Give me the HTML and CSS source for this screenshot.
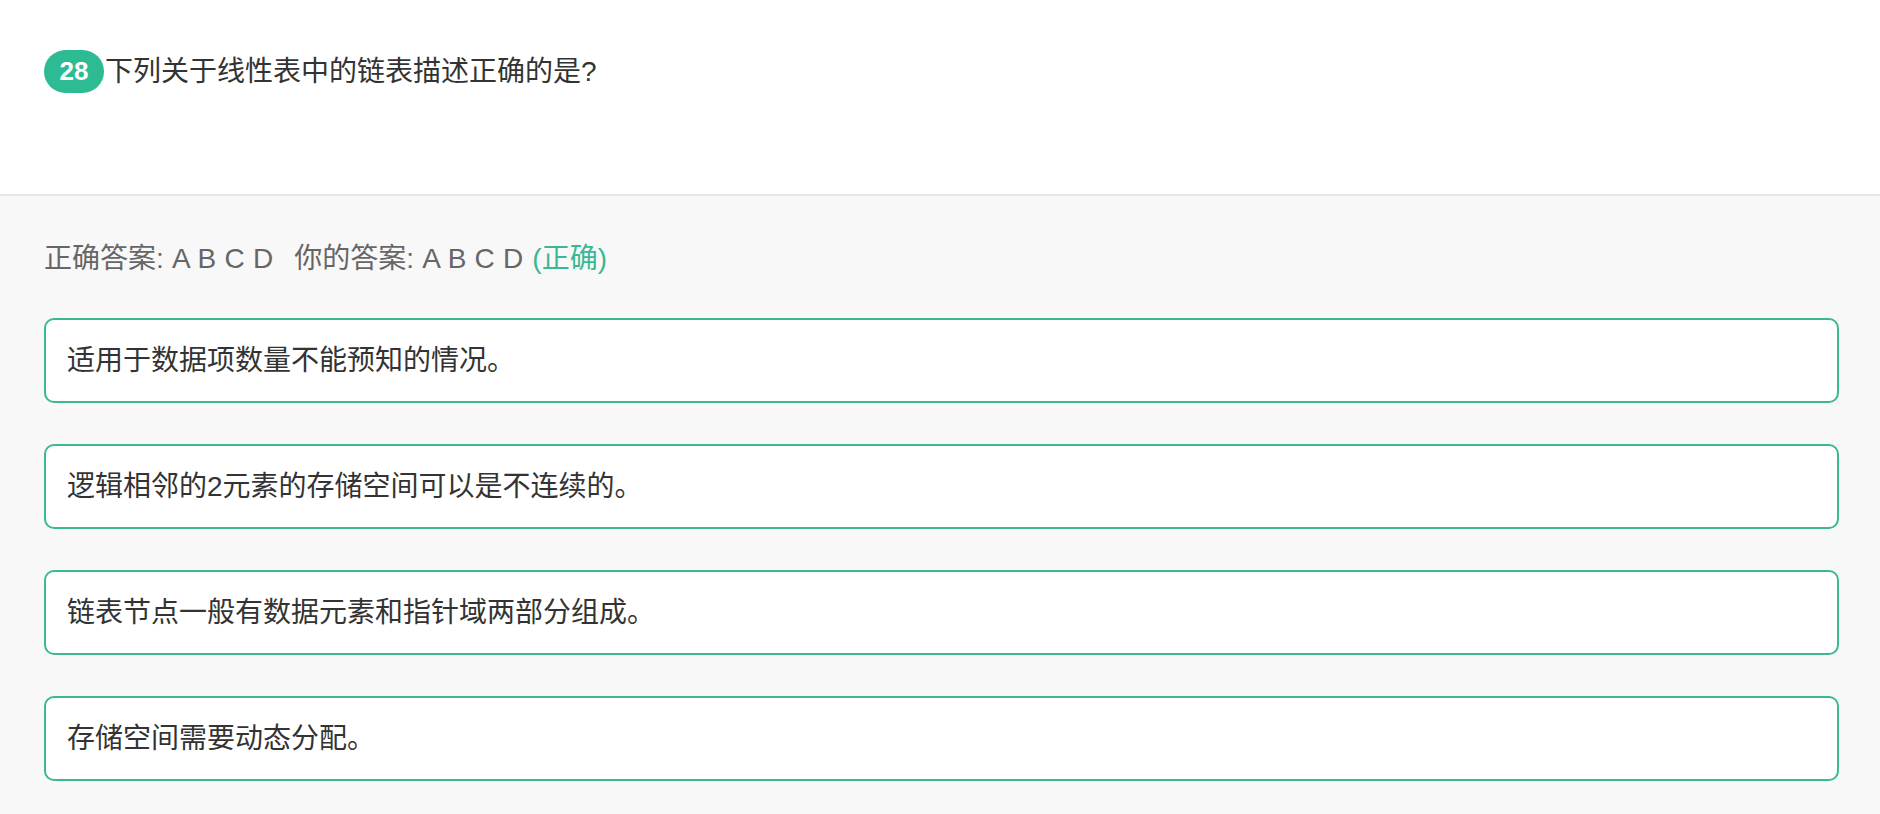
FILE: index.html
```html
<!DOCTYPE html>
<html lang="zh-CN">
<head>
<meta charset="utf-8">
<title>题目</title>
<link rel="stylesheet" href="styles.css">
</head>
<body>
<div class="question">
  <div class="q-row">
    <span class="badge">28</span>
    <span class="q-text">下列关于线性表中的链表描述正确的是?</span>
  </div>
</div>
<div class="answer-area">
  <div class="answer-line">
    <span class="label">正确答案: A B C D</span>
    <span class="label mine">你的答案: A B C D</span>
    <span class="result">(正确)</span>
  </div>
  <div class="options">
    <div class="option">适用于数据项数量不能预知的情况。</div>
    <div class="option">逻辑相邻的2元素的存储空间可以是不连续的。</div>
    <div class="option">链表节点一般有数据元素和指针域两部分组成。</div>
    <div class="option">存储空间需要动态分配。</div>
  </div>
</div>
</body>
</html>
```
FILE: styles.css
```css
html, body {
  margin: 0;
  padding: 0;
  background: #f8f8f8;
}
body {
  font-family: "Liberation Sans", "Noto Sans CJK SC", sans-serif;
  color: #333;
}
.question {
  background: #fff;
  height: 194px;
  border-bottom: 2px solid #e7e7e7;
  box-sizing: content-box;
}
.q-row {
  display: flex;
  align-items: center;
  padding: 50px 0 0 44px;
}
.badge {
  display: flex;
  align-items: center;
  justify-content: center;
  width: 60px;
  height: 43px;
  border-radius: 22px;
  background: #2dbb93;
  color: #fff;
  font-size: 26px;
  font-weight: 700;
}
.q-text {
  margin-left: 1px;
  font-size: 28px;
  line-height: 43px;
  color: #333;
}
.answer-area {
  padding: 40px 41px 30px 44px;
}
.answer-line {
  display: flex;
  align-items: center;
  height: 40px;
  font-size: 28px;
  color: #666;
  white-space: pre;
}
.answer-line .label {
  word-spacing: 0.5px;
}
.answer-line .mine {
  margin-left: 21px;
}
.answer-line .result {
  margin-left: 9px;
  color: #3ab894;
}
.options {
  display: flex;
  flex-direction: column;
  gap: 41px;
  margin-top: 42px;
}
.option {
  background: #fff;
  border: 2px solid #3cb896;
  border-radius: 10px;
  padding: 20px 21px;
  font-size: 28px;
  line-height: 41px;
  color: #333;
}
```
